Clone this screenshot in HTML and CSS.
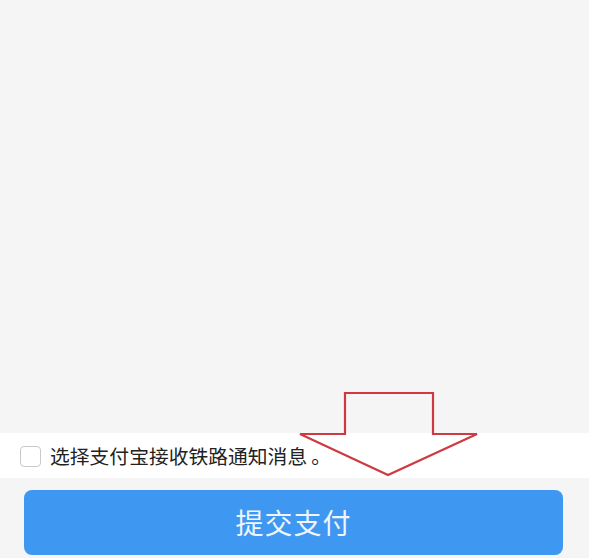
FILE: index.html
```html
<!DOCTYPE html>
<html lang="zh-CN">
<head>
    <meta charset="UTF-8">
    <meta name="viewport" content="width=device-width, initial-scale=1.0">
    <title>提交支付</title>
    <link rel="stylesheet" href="styles.css">
</head>
<body>
    <div class="page">
        <div class="content"></div>
        <label class="notice">
            <span class="check"></span>
            <span class="notice-text">选择支付宝接收铁路通知消息<span class="stop">。</span></span>
        </label>
        <button class="pay-button">提交支付</button>
    </div>
    <!-- 提示箭头 -->
    <svg class="hint-arrow" width="589" height="558" viewBox="0 0 589 558">
        <polygon points="345,393 433,393 433,434 477,434 388,475 300,434 345,434"
                 fill="none" stroke="#cf3a42" stroke-width="2.2" stroke-linejoin="miter"/>
    </svg>
</body>
</html>
```

FILE: styles.css
```css
html, body {
    margin: 0;
    height: 100%;
}
body {
    background: #f5f5f5;
    font-family: "Noto Sans CJK SC", "Noto Sans", sans-serif;
    position: relative;
}
.page {
    height: 100vh;
    display: flex;
    flex-direction: column;
}
.content {
    flex: 1;
}
.notice {
    height: 45px;
    background: #fff;
    display: flex;
    align-items: center;
    padding-left: 20px;
    gap: 9px;
}
.check {
    width: 19px;
    height: 19px;
    border: 1px solid #c9c9c9;
    border-radius: 4px;
    background: #fff;
    margin-top: 1px;
}
.notice-text {
    font-size: 19.8px;
    color: #222;
}
.stop {
    margin-left: 4px;
}
.pay-button {
    margin: 12px 26px 3px 24px;
    height: 65px;
    border: none;
    border-radius: 8px;
    background: #3e97f1;
    color: #eef5fd;
    font-family: "Noto Sans CJK SC", "Noto Sans", sans-serif;
    font-size: 28px;
    letter-spacing: 1px;
    padding: 0 0 2px;
}
.hint-arrow {
    position: absolute;
    left: 0;
    top: 0;
    pointer-events: none;
}
```
